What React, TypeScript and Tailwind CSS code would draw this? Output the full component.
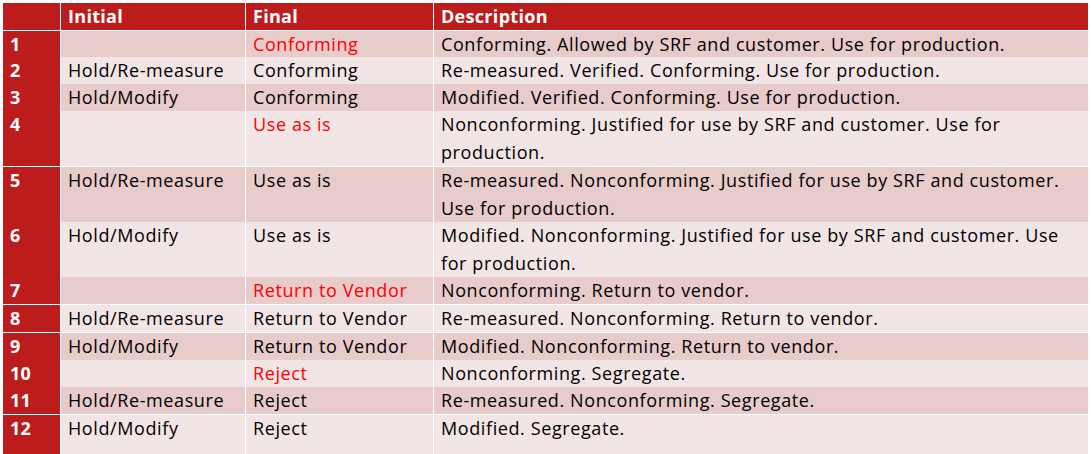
const rows = [
  { n: '1', initial: '', final: 'Conforming', red: true, desc: ['Conforming. Allowed by SRF and customer. Use for production.'], h: 'h-[25px]', dark: true },
  { n: '2', initial: 'Hold/Re-measure', final: 'Conforming', red: false, desc: ['Re-measured. Verified. Conforming. Use for production.'], h: 'h-[26px]', dark: false },
  { n: '3', initial: 'Hold/Modify', final: 'Conforming', red: false, desc: ['Modified. Verified. Conforming. Use for production.'], h: 'h-[26px]', dark: true },
  { n: '4', initial: '', final: 'Use as is', red: true, desc: ['Nonconforming. Justified for use by SRF and customer. Use for', 'production.'], h: 'h-[55px]', dark: false },
  { n: '5', initial: 'Hold/Re-measure', final: 'Use as is', red: false, desc: ['Re-measured. Nonconforming. Justified for use by SRF and customer.', 'Use for production.'], h: 'h-[54px]', dark: true },
  { n: '6', initial: 'Hold/Modify', final: 'Use as is', red: false, desc: ['Modified. Nonconforming. Justified for use by SRF and customer. Use', 'for production.'], h: 'h-[54px]', dark: false },
  { n: '7', initial: '', final: 'Return to Vendor', red: true, desc: ['Nonconforming. Return to vendor.'], h: 'h-[27px]', dark: true },
  { n: '8', initial: 'Hold/Re-measure', final: 'Return to Vendor', red: false, desc: ['Re-measured. Nonconforming. Return to vendor.'], h: 'h-[27px]', dark: false },
  { n: '9', initial: 'Hold/Modify', final: 'Return to Vendor', red: false, desc: ['Modified. Nonconforming. Return to vendor.'], h: 'h-[26px]', dark: true },
  { n: '10', initial: '', final: 'Reject', red: true, desc: ['Nonconforming. Segregate.'], h: 'h-[26px]', dark: false },
  { n: '11', initial: 'Hold/Re-measure', final: 'Reject', red: false, desc: ['Re-measured. Nonconforming. Segregate.'], h: 'h-[27px]', dark: true },
  { n: '12', initial: 'Hold/Modify', final: 'Reject', red: false, desc: ['Modified. Segregate.'], h: 'h-[45px]', dark: false },
];

export default function App() {
  return (
    <div className="w-[1091px] h-[454px] overflow-hidden bg-white pt-[3px] px-[3px] font-['Open_Sans',sans-serif] text-[18px] tracking-[0.6px] leading-[27px] text-black">
      {/* Header */}
      <div className="grid grid-cols-[57px_184px_187px_1fr] gap-x-px h-[24px] mb-[4px]">
        <div className="bg-[#bd1c1d]" />
        <div className="bg-[#bd1c1d] px-[7px] font-bold tracking-[0.3px] text-white">Initial</div>
        <div className="bg-[#bd1c1d] px-[7px] font-bold tracking-[0.3px] text-white">Final</div>
        <div className="bg-[#bd1c1d] px-[7px] font-bold tracking-[0.3px] text-white">Description</div>
      </div>

      {/* Body */}
      <div className="flex flex-col gap-y-px">
        {rows.map((r) => (
          <div key={r.n} className={`grid grid-cols-[57px_184px_187px_1fr] gap-x-px ${r.h}`}>
            <div className="bg-[#bd1c1d] px-[7px] font-bold tracking-[0.3px] text-white">{r.n}</div>
            <div className={`${r.dark ? 'bg-[#e8cbcb]' : 'bg-[#f2e5e5]'} px-[7px] whitespace-nowrap`}>{r.initial}</div>
            <div className={`${r.dark ? 'bg-[#e8cbcb]' : 'bg-[#f2e5e5]'} px-[7px] whitespace-nowrap ${r.red ? 'text-[#ff0000]' : ''}`}>
              {r.final}
            </div>
            <div className={`${r.dark ? 'bg-[#e8cbcb]' : 'bg-[#f2e5e5]'} px-[7px] whitespace-nowrap`}>
              {r.desc.map((line, i) => (
                <div key={i} className="h-[28px] last:h-auto">{line}</div>
              ))}
            </div>
          </div>
        ))}
      </div>
    </div>
  );
}
